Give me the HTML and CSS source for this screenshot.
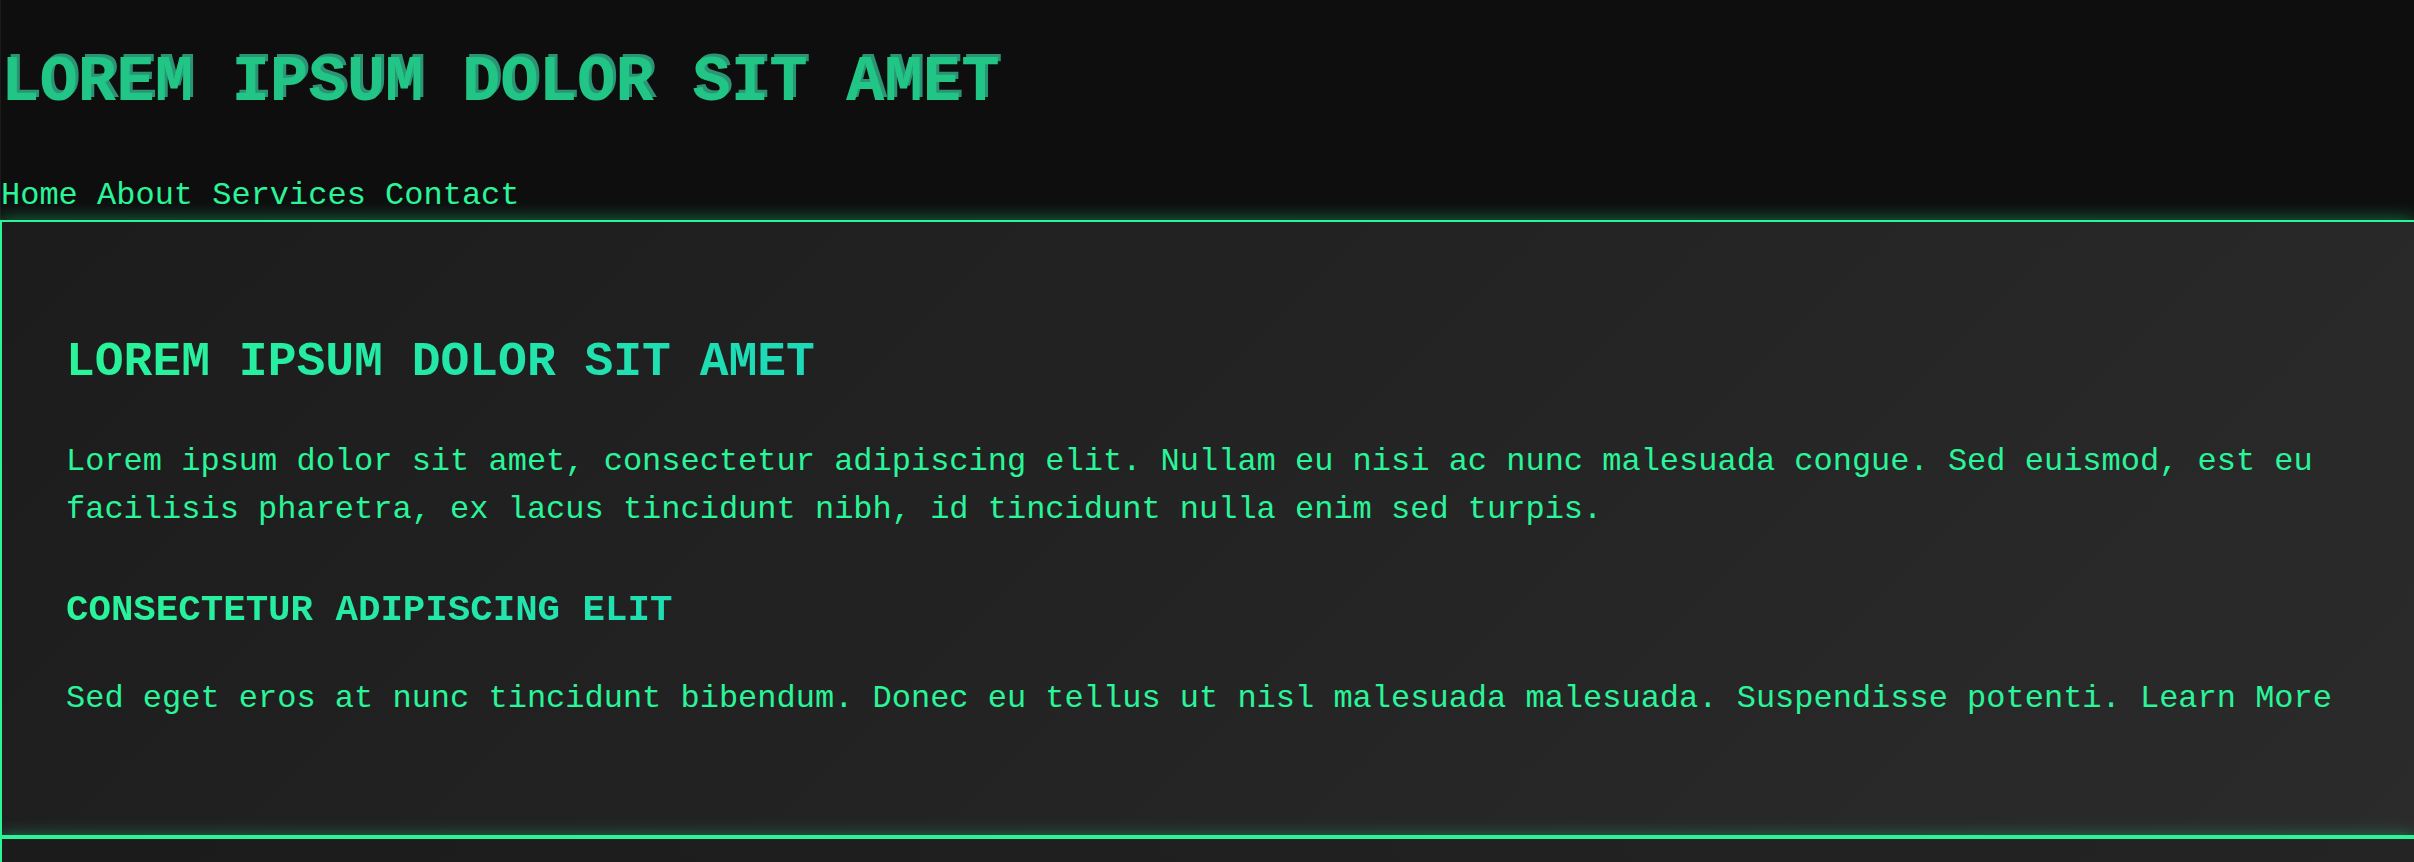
FILE: index.html
```html
<!DOCTYPE html>
<html lang="en">
<head>
<meta charset="utf-8">
<title>Lorem Ipsum</title>
<link rel="stylesheet" href="styles.css">
</head>
<body>
  <header class="site-header">
    <h1 class="site-title">LOREM IPSUM DOLOR SIT AMET</h1>
    <nav class="site-nav">
      <a href="#" class="nav-link">Home</a>
      <a href="#" class="nav-link">About</a>
      <a href="#" class="nav-link">Services</a>
      <a href="#" class="nav-link">Contact</a>
    </nav>
  </header>
  <main class="panel">
    <h2 class="panel-title">LOREM IPSUM DOLOR SIT AMET</h2>
    <p class="panel-text">Lorem ipsum dolor sit amet, consectetur adipiscing elit. Nullam eu nisi ac nunc malesuada congue. Sed euismod, est eu facilisis pharetra, ex lacus tincidunt nibh, id tincidunt nulla enim sed turpis.</p>
    <h3 class="panel-subtitle">CONSECTETUR ADIPISCING ELIT</h3>
    <p class="panel-text">Sed eget eros at nunc tincidunt bibendum. Donec eu tellus ut nisl malesuada malesuada. Suspendisse potenti. <a href="#" class="panel-link">Learn More</a></p>
  </main>
  <footer class="site-footer"></footer>
</body>
</html>
```

FILE: styles.css
```css
html, body {
  margin: 0;
  padding: 0;
  overflow: hidden;
}

body {
  background: #1c1c1c;
  color: #2af598;
  font-family: "Courier New", Courier, "Liberation Mono", monospace;
  font-size: 32px;
  line-height: 1.5;
}

.site-header {
  background: #0e0e0e;
  border-left: 1px solid #1b1b1b;
  display: flow-root;
}

.site-title {
  font-size: 64px;
  line-height: 96px;
  font-weight: bold;
  margin: 35px 0 41px;
  color: #21c686;
  text-shadow: 3px -3px 0 #2a9474;
  white-space: nowrap;
}

.site-nav {
  line-height: 48px;
}

.nav-link {
  color: #2af598;
  text-decoration: none;
}

.panel {
  padding: 64px 0 64px 64px;
  border: 2px solid #2af598;
  border-right: 0;
  background: linear-gradient(135deg, #1c1c1c 0%, #2b2b2b 100%);
  box-shadow: 0 0 18px rgba(42, 245, 152, 0.45);
}

.panel-title,
.panel-subtitle {
  background: linear-gradient(90deg, #2af598, #009efd);
  -webkit-background-clip: text;
  background-clip: text;
  color: transparent;
}

.panel-title {
  font-size: 48px;
  margin: 39.84px 0;
}

.panel-subtitle {
  font-size: 37.44px;
  margin: 37.44px 0;
}

.panel-text {
  margin: 0 64px 48px 0;
}

.panel-link {
  color: #2af598;
  text-decoration: none;
}

.site-footer {
  height: 23px;
  border-top: 2px solid #2af598;
  border-left: 2px solid #2af598;
  background: linear-gradient(90deg, #1b1b1b, #242424);
  box-shadow: 0 0 18px rgba(42, 245, 152, 0.45);
}
```
